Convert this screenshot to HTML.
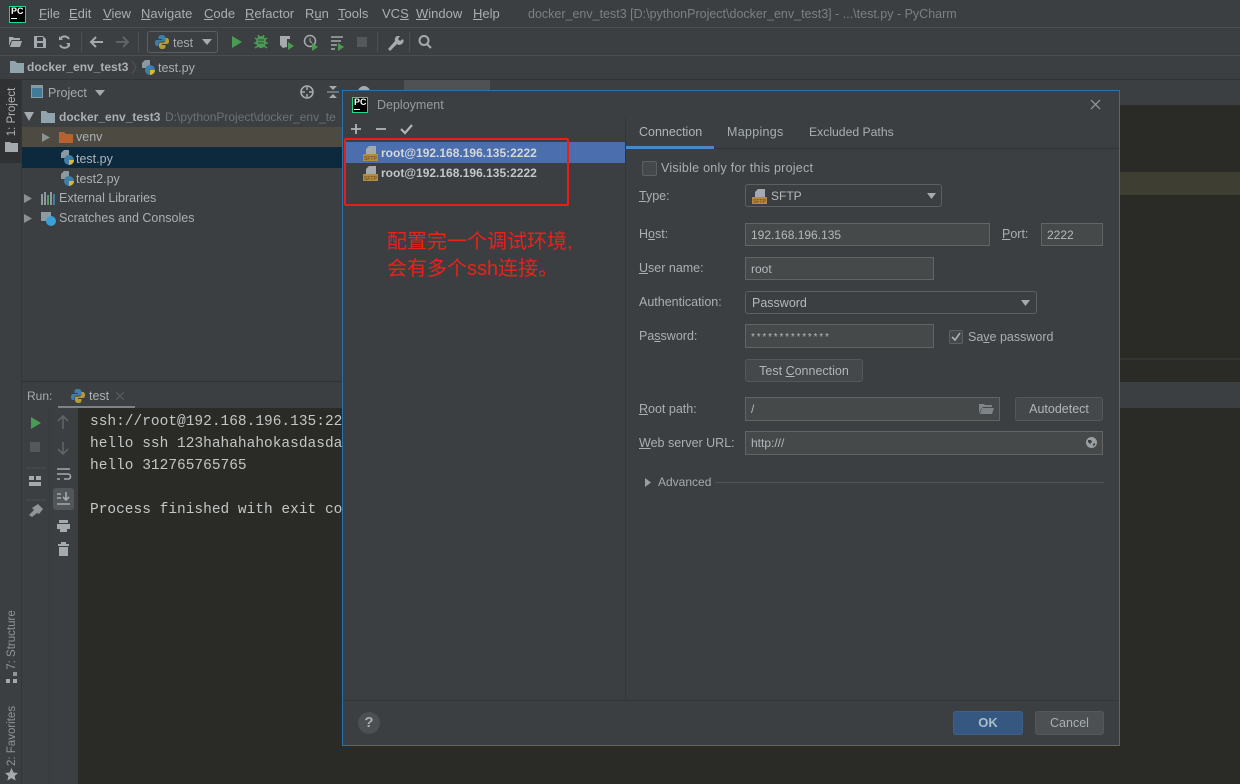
<!DOCTYPE html>
<html><head><meta charset="utf-8"><style>
html,body{margin:0;padding:0;background:#2b2b27}
#r{position:relative;width:1240px;height:784px;overflow:hidden;background:#2a2b26;font-family:"Liberation Sans","Noto Sans CJK SC",sans-serif;font-size:12.5px;color:#a9b0b5;filter:blur(.35px)}
#r div,#r span.a,#r svg{position:absolute}
.t{white-space:nowrap;line-height:16px}
u{text-underline-offset:1px}
.f{background:#45494a;border:1px solid #646464;box-sizing:border-box;padding-left:5px;line-height:23px;color:#b4b9bc;white-space:nowrap;font-size:12px}
.c{background:#3c3f41;border:1px solid #5e6060;border-radius:3px;box-sizing:border-box;padding-left:6px;line-height:22px;color:#b4b9bc;font-size:12.5px}
.b{background:#44484a;border:1px solid #555859;border-radius:3px;box-sizing:border-box;text-align:center;line-height:22px;color:#b0b5b8;white-space:nowrap}
.m{font-family:"Liberation Mono",monospace;font-size:14.5px;color:#c2c6c4;white-space:nowrap;line-height:20px}
</style></head><body><div id="r">
<!-- top bars -->
<div style="left:0;top:0;width:1240px;height:27px;background:#3c3f41"></div>
<div style="left:0;top:27px;width:1240px;height:1px;background:#4a4c4e"></div>
<div style="left:0;top:28px;width:1240px;height:27px;background:#3c3f41"></div>
<div style="left:0;top:55px;width:1240px;height:1px;background:#4b4d4e"></div>
<div style="left:0;top:56px;width:1240px;height:23px;background:#3c3f41"></div>
<div style="left:0;top:79px;width:1240px;height:1px;background:#323232"></div>
<div style="left:0;top:80px;width:1240px;height:25px;background:#3c3f41"></div>

<!-- PC logo -->
<div style="left:9px;top:6px;width:15px;height:15px;background:#000;border:1px solid #21d789;box-sizing:content-box"></div>
<div class="t" style="left:11px;top:6px;font-size:9px;font-weight:bold;color:#fff;line-height:11px">PC</div>
<div style="left:11px;top:18px;width:6px;height:1px;background:#fff"></div>
<!-- menu -->
<div class="t" style="left:39px;top:6px;font-size:13px;color:#a8aeb2"><u>F</u>ile</div>
<div class="t" style="left:69px;top:6px;font-size:13px;color:#a8aeb2"><u>E</u>dit</div>
<div class="t" style="left:103px;top:6px;font-size:13px;color:#a8aeb2"><u>V</u>iew</div>
<div class="t" style="left:141px;top:6px;font-size:13px;color:#a8aeb2"><u>N</u>avigate</div>
<div class="t" style="left:204px;top:6px;font-size:13px;color:#a8aeb2"><u>C</u>ode</div>
<div class="t" style="left:245px;top:6px;font-size:13px;color:#a8aeb2"><u>R</u>efactor</div>
<div class="t" style="left:305px;top:6px;font-size:13px;color:#a8aeb2">R<u>u</u>n</div>
<div class="t" style="left:338px;top:6px;font-size:13px;color:#a8aeb2"><u>T</u>ools</div>
<div class="t" style="left:382px;top:6px;font-size:13px;color:#a8aeb2">VC<u>S</u></div>
<div class="t" style="left:416px;top:6px;font-size:13px;color:#a8aeb2"><u>W</u>indow</div>
<div class="t" style="left:473px;top:6px;font-size:13px;color:#a8aeb2"><u>H</u>elp</div>
<div class="t" style="left:528px;top:6px;font-size:12.5px;color:#7b8083">docker_env_test3 [D:\pythonProject\docker_env_test3] - ...\test.py - PyCharm</div>

<!-- toolbar icons -->
<svg style="left:0;top:28px" width="450" height="28" viewBox="0 0 450 28">
<path d="M9 18V9h4l1 1h6v2h-8l-1 1zM10 19l2-6h10l-2 6z" fill="#a4aaad"/>
<path d="M34 8h9l3 3v9H34zM37 9v4h6V9zM37 15v4h6v-4z" fill="#a4aaad" fill-rule="evenodd"/>
<path d="M69 11a5 5 0 0 0-8-1M60 17a5 5 0 0 0 9 0" fill="none" stroke="#a4aaad" stroke-width="2"/><path d="M59 8v4h4zM70 19v-4h-4z" fill="#a4aaad"/>
<rect x="81" y="4" width="1" height="20" fill="#4e5052"/>
<path d="M103 14H91M96 9l-5 5 5 5" fill="none" stroke="#a4aaad" stroke-width="2"/>
<path d="M116 14h12M123 9l5 5-5 5" fill="none" stroke="#5f6466" stroke-width="2"/>
<rect x="138" y="4" width="1" height="20" fill="#4e5052"/>
<path d="M232 8l10 6-10 6z" fill="#499c54"/>
<ellipse cx="261" cy="14" rx="5" ry="6" fill="#499c54"/><path d="M255 10l3 2M267 10l-3 2M254 15h3M265 15h3M255 20l3-2M267 20l-3-2M258 7l1 2M264 7l-1 2" stroke="#499c54" stroke-width="1.5"/><path d="M258 12h6M258 15h6" stroke="#3c3f41"/>
<path d="M280 8h10v3h-3v8l-4 1-3-3z" fill="#a4aaad"/><path d="M288 14l6 4-6 4z" fill="#499c54"/>
<circle cx="310" cy="13" r="5.5" fill="none" stroke="#a4aaad" stroke-width="1.5"/><path d="M310 10v3l2 2" stroke="#a4aaad" fill="none"/><path d="M312 15l6 4-6 4z" fill="#499c54"/>
<path d="M331 9h12M331 13h10M331 17h6M331 21h4" stroke="#a4aaad" stroke-width="1.6"/><path d="M338 15l6 4-6 4z" fill="#499c54"/>
<rect x="357" y="9" width="10" height="10" fill="#55585a"/>
<rect x="377" y="4" width="1" height="20" fill="#4e5052"/>
<path d="M388 21l7-8a4 4 0 0 1 2-5l3 0-2 3 2 2 3-2a4 4 0 0 1-6 5l-7 7z" fill="#a4aaad"/>
<rect x="409" y="4" width="1" height="20" fill="#4e5052"/>
<circle cx="424" cy="12.500" r="4.500" fill="none" stroke="#a4aaad" stroke-width="2"/><path d="M427 16l4 4" stroke="#a4aaad" stroke-width="2"/>
</svg>
<!-- run config combo -->
<div style="left:147px;top:31px;width:71px;height:22px;border:1px solid #5b5e60;border-radius:3px;box-sizing:border-box;background:#3c3f41"></div>
<svg style="left:155px;top:35px" width="14" height="14" viewBox="0 0 14 14"><path d="M7 0C4 0 3.500 1 3.500 3v1H7v1H2C0.500 5 0 6.500 0 8s.7 3 2 3h1.500V9c0-1.500 1-2.500 2.500-2.500h3c1 0 1.500-.7 1.500-1.500V3C10.500 1 9 0 7 0z" fill="#3d7fa8"/><path d="M7 14c3 0 3.500-1 3.500-3v-1H7V9h5c1.500 0 2-1.500 2-3s-.7-3-2-3h-1.500v2c0 1.500-1 2.500-2.500 2.500H5.500C4.500 7.500 4 8.200 4 9v2c0 2 1.500 3 3 3z" fill="#b59a3a"/></svg>
<div class="t" style="left:173px;top:35px;font-size:12.5px;color:#a4aaad">test</div>
<svg style="left:202px;top:39px" width="10" height="6"><path d="M0 0h10L5 6z" fill="#a4aaad"/></svg>

<!-- breadcrumb -->
<svg style="left:10px;top:61px" width="14" height="12"><path d="M0 0h5l2 2h7v10H0z" fill="#90a4ae"/></svg>
<div class="t" style="left:27px;top:59px;font-weight:bold;font-size:12px;color:#aab0b4">docker_env_test3</div>
<svg style="left:131px;top:60px" width="6" height="15"><path d="M1 1l4 6-4 7" fill="none" stroke="#55585a"/></svg>
<svg style="left:142px;top:60px" width="14" height="15" viewBox="0 0 14 15"><path d="M3 0h5v8H0V3z" fill="#8a9aa3"/><circle cx="8" cy="10" r="5" fill="#3d7fa8"/><path d="M8 15a5 5 0 0 0 5-5H8z" fill="#e0b43a"/></svg>
<div class="t" style="left:158px;top:60px;color:#a9afb3">test.py</div>

<!-- left strip -->
<div style="left:0;top:80px;width:21px;height:704px;background:#3c3f41"></div>
<div style="left:21px;top:80px;width:1px;height:704px;background:#333536"></div>
<div style="left:0;top:80px;width:21px;height:83px;background:#2f3132"></div>
<div class="t" style="left:-18px;top:104px;width:60px;transform:rotate(-90deg);text-align:center;font-size:11.5px;color:#b0b5b8;">1: Project</div>
<svg style="left:5px;top:142px" width="13" height="10"><path d="M0 0h5l1 1h7v9H0z" fill="#a4aaad"/></svg>
<div class="t" style="left:-18px;top:632px;width:60px;transform:rotate(-90deg);text-align:center;font-size:11.5px;color:#8f9598">7: Structure</div>
<svg style="left:6px;top:672px" width="11" height="12"><rect x="7" y="0" width="4" height="4" fill="#8f9598"/><rect x="0" y="7" width="4" height="4" fill="#a4aaad"/><rect x="7" y="7" width="4" height="4" fill="#a4aaad"/></svg>
<div class="t" style="left:-18px;top:728px;width:60px;transform:rotate(-90deg);text-align:center;font-size:11.5px;color:#8f9598">2: Favorites</div>
<svg style="left:5px;top:768px" width="13" height="13" viewBox="0 0 13 13"><path d="M6.500 0l2 4.500 4.500.5-3.400 3 1 4.500-4.100-2.400L2.400 12.500l1-4.500L0 5l4.500-.5z" fill="#a4aaad"/></svg>

<!-- project pane -->
<div style="left:22px;top:80px;width:322px;height:302px;background:#3c3f41"></div>
<div style="left:31px;top:85px;width:12px;height:13px;background:#3f7c99;border:1px solid #8a9aa3;border-top-width:3px;box-sizing:border-box"></div>
<div class="t" style="left:48px;top:85px;font-size:12.5px;color:#a4aaad">Project</div>
<svg style="left:95px;top:90px" width="10" height="6"><path d="M0 0h10L5 6z" fill="#a4aaad"/></svg>
<svg style="left:299px;top:84px" width="80" height="16"><circle cx="8" cy="8" r="6" fill="none" stroke="#a4aaad" stroke-width="1.6"/><path d="M8 2v4M8 10v4M2 8h4M10 8h4" stroke="#a4aaad" stroke-width="1.5"/><path d="M28 8h12" stroke="#a4aaad"/><path d="M30 2l4 4 4-4zM30 14l4-4 4 4z" fill="#a4aaad"/><circle cx="65" cy="8" r="6" fill="#a4aaad"/></svg>
<svg style="left:24px;top:112px" width="10" height="9"><path d="M0 0h10L5 9z" fill="#a4aaad"/></svg>
<svg style="left:41px;top:110px" width="14" height="13"><path d="M0 1h5l2 2h7v10H0z" fill="#90a4ae"/></svg>
<div class="t" style="left:59px;top:109px;font-weight:bold;font-size:12px;color:#aab0b4">docker_env_test3</div>
<div class="t" style="left:165px;top:109px;font-size:12px;color:#6d7275">D:\pythonProject\docker_env_te</div>
<div style="left:22px;top:127px;width:322px;height:20px;background:#4d4a41"></div>
<svg style="left:42px;top:133px" width="8" height="9"><path d="M0 0l8 4.500L0 9z" fill="#8c9093"/></svg>
<svg style="left:59px;top:132px" width="14" height="11"><path d="M0 0h5l2 2h7v9H0z" fill="#b5622e"/></svg>
<div class="t" style="left:76px;top:129px;color:#a9afb3">venv</div>
<div style="left:22px;top:147px;width:322px;height:21px;background:#0d293e"></div>
<svg style="left:61px;top:150px" width="14" height="15" viewBox="0 0 14 15"><path d="M3 0h5v8H0V3z" fill="#8a9aa3"/><circle cx="8" cy="10" r="5" fill="#3d7fa8"/><path d="M8 15a5 5 0 0 0 5-5H8z" fill="#e0b43a"/></svg>
<div class="t" style="left:76px;top:151px;font-size:12.5px;color:#b0b5b8">test.py</div>
<svg style="left:61px;top:171px" width="14" height="15" viewBox="0 0 14 15"><path d="M3 0h5v8H0V3z" fill="#8a9aa3"/><circle cx="8" cy="10" r="5" fill="#3d7fa8"/><path d="M8 15a5 5 0 0 0 5-5H8z" fill="#e0b43a"/></svg>
<div class="t" style="left:76px;top:171px;font-size:12.5px;color:#a9afb3">test2.py</div>
<svg style="left:24px;top:194px" width="9" height="9"><path d="M0 0l8 4.500L0 9z" fill="#8c9093"/></svg>
<svg style="left:41px;top:192px" width="15" height="13"><path d="M1 2v11M4 0v13M7 3v10M10 0v13M13 2v11" stroke-width="2" stroke="#8f9aa0"/><path d="M7 3v10" stroke="#5a9a6a" stroke-width="2"/><path d="M13 2v11" stroke="#3d7fa8" stroke-width="2"/></svg>
<div class="t" style="left:59px;top:190px;font-size:12.500px;color:#a9afb3">External Libraries</div>
<svg style="left:24px;top:214px" width="9" height="9"><path d="M0 0l8 4.500L0 9z" fill="#8c9093"/></svg>
<svg style="left:41px;top:212px" width="16" height="14"><rect x="0" y="0" width="10" height="9" fill="#8f9aa0"/><circle cx="10" cy="9" r="5" fill="#3aa0d8"/></svg>
<div class="t" style="left:59px;top:210px;font-size:12.500px;color:#a9afb3">Scratches and Consoles</div>

<!-- editor -->
<div style="left:344px;top:105px;width:896px;height:255px;background:#2a2b26"></div>
<div style="left:404px;top:80px;width:86px;height:25px;background:#4e5254"></div>
<div style="left:1120px;top:172px;width:120px;height:23px;background:#3e3e33"></div>
<div style="left:1120px;top:358px;width:120px;height:2px;background:#333434"></div>
<div style="left:1120px;top:382px;width:120px;height:26px;background:#3c3f41"></div>

<!-- run pane -->
<div style="left:22px;top:381px;width:330px;height:1px;background:#323232"></div>
<div style="left:22px;top:382px;width:330px;height:26px;background:#3c3f41"></div>
<div class="t" style="left:27px;top:388px;font-size:12px;color:#a4aaad">Run:</div>
<svg style="left:71px;top:389px" width="14" height="14" viewBox="0 0 14 14"><path d="M7 0C4 0 3.500 1 3.500 3v1H7v1H2C0.500 5 0 6.500 0 8s.7 3 2 3h1.500V9c0-1.500 1-2.500 2.500-2.500h3c1 0 1.500-.7 1.500-1.500V3C10.500 1 9 0 7 0z" fill="#3d7fa8"/><path d="M7 14c3 0 3.500-1 3.500-3v-1H7V9h5c1.500 0 2-1.500 2-3s-.7-3-2-3h-1.500v2c0 1.500-1 2.500-2.500 2.500H5.500C4.500 7.500 4 8.200 4 9v2c0 2 1.500 3 3 3z" fill="#b59a3a"/></svg>
<div class="t" style="left:89px;top:388px;font-size:12.500px;color:#a9afb3">test</div>
<svg style="left:116px;top:392px" width="8" height="8"><path d="M0 0l8 8M8 0L0 8" stroke="#5d6163"/></svg>
<div style="left:58px;top:406px;width:77px;height:3px;background:#7e8284"></div>
<div style="left:22px;top:408px;width:27px;height:376px;background:#3c3f41"></div>
<div style="left:49px;top:408px;width:29px;height:376px;background:#3c3f41;border-left:1px solid #383a3c;box-sizing:border-box"></div>
<div style="left:53px;top:488px;width:21px;height:22px;background:#515659;border-radius:3px"></div>
<svg style="left:22px;top:408px" width="56" height="160">
<path d="M9 9l10 6-10 6z" fill="#499c54"/>
<rect x="8" y="34" width="10" height="10" fill="#55585a"/>
<path d="M4 60h20M4 92h20" stroke="#4b4e50"/>
<path d="M7 68h5v4H7zM14 68h5v4h-5zM7 74h12v4H7z" fill="#a4aaad"/>
<path d="M41 21V8M36 13l5-5 5 5" fill="none" stroke="#5f6466" stroke-width="1.600"/>
<path d="M41 34v12M36 41l5 5 5-5" fill="none" stroke="#5f6466" stroke-width="1.600"/>
<path d="M35 61h13M35 66h11a2.500 2.500 0 0 1 0 5h-4M35 71h3" fill="none" stroke="#a4aaad" stroke-width="1.600"/>
<path d="M35 86h4M35 90h4M35 96h13M44 84v8M41 89l3 3 3-3" fill="none" stroke="#a4aaad" stroke-width="1.600"/>
<path d="M37 112h9v3h-9zM35 116h13v5h-3v3h-7v-3h-3z" fill="#a4aaad"/>
<path d="M36 136h11v2H36zM37 139h9v9h-9zM39 134h5v2h-5z" fill="#a4aaad"/>
<path d="M7 107l5-5-2-2 6-4 5 5-4 5-2-1-5 4z" fill="#8f9598"/>
</svg>
<div style="left:78px;top:408px;width:270px;height:376px;overflow:hidden;background:#2a2b26"></div>
<div class="m" style="left:90px;top:412px">ssh://root@192.168.196.135:22</div>
<div class="m" style="left:90px;top:434px">hello ssh 123hahahahokasdasda</div>
<div class="m" style="left:90px;top:456px">hello 312765765765</div>
<div class="m" style="left:90px;top:500px">Process finished with exit co</div>

<!-- dialog -->
<div style="left:342px;top:90px;width:778px;height:656px;background:#3c3f41;border:1px solid #2673ad;box-sizing:border-box"></div>
<div style="left:352px;top:97px;width:14px;height:14px;background:#000;border:1px solid #21d789"></div>
<div class="t" style="left:354px;top:97px;font-size:9px;font-weight:bold;color:#fff;line-height:11px">PC</div>
<div style="left:354px;top:109px;width:6px;height:1px;background:#fff"></div>
<div class="t" style="left:377px;top:97px;font-size:12.500px;color:#979c9f">Deployment</div>
<svg style="left:1090px;top:99px" width="11" height="11"><path d="M1 1l9 9M10 1l-9 9" stroke="#9a9fa2" stroke-width="1.200"/></svg>
<svg style="left:350px;top:123px" width="66" height="14"><path d="M6 1v10M1 6h10" stroke="#b0b5b8" stroke-width="1.800"/><path d="M26 6h10" stroke="#b0b5b8" stroke-width="1.800"/><path d="M51 6l4 4 7-8" fill="none" stroke="#b0b5b8" stroke-width="2.200"/></svg>
<div style="left:625px;top:118px;width:1px;height:582px;background:#333536"></div>
<!-- list -->
<div style="left:346px;top:142px;width:279px;height:21px;background:#4b6eaf"></div>
<svg style="left:363px;top:146px" width="16" height="15" viewBox="0 0 16 15"><path d="M6 0h7v8H3V3z" fill="#a4aaad"/><rect y="8" width="15" height="7" fill="#b58a3a"/><text x="1" y="14" font-size="5" font-family="Liberation Sans" fill="#5a4420">SFTP</text></svg>
<div class="t" style="left:381px;top:145px;font-weight:bold;font-size:12px;color:#d5d7d9">root@192.168.196.135:2222</div>
<svg style="left:363px;top:166px" width="16" height="15" viewBox="0 0 16 15"><path d="M6 0h7v8H3V3z" fill="#a4aaad"/><rect y="8" width="15" height="7" fill="#b58a3a"/><text x="1" y="14" font-size="5" font-family="Liberation Sans" fill="#5a4420">SFTP</text></svg>
<div class="t" style="left:381px;top:165px;font-weight:bold;font-size:12px;color:#c3c6c8">root@192.168.196.135:2222</div>
<div style="left:344px;top:138px;width:225px;height:68px;border:2px solid #f01b12;border-radius:2px;box-sizing:border-box"></div>
<div class="t" style="left:387px;top:229px;font-size:20px;line-height:27px;color:#e8231a;white-space:nowrap">配置完一个调试环境,<br>会有多个ssh连接。</div>

<!-- tabs -->
<div style="left:626px;top:148px;width:493px;height:1px;background:#323232"></div>
<div style="left:626px;top:146px;width:88px;height:3px;background:#4a88c7"></div>
<div class="t" style="left:639px;top:124px;color:#b0b5b8">Connection</div>
<div class="t" style="left:727px;top:124px;color:#a9afb3;letter-spacing:.3px">Mappings</div>
<div class="t" style="left:809px;top:124px;color:#a9afb3;font-size:12.2px">Excluded Paths</div>

<!-- form -->
<div style="left:642px;top:161px;width:13px;height:13px;background:#43494a;border:1px solid #5e6060;border-radius:2px"></div>
<div class="t" style="left:661px;top:160px;color:#a9afb3;letter-spacing:.25px">Visible only for this project</div>
<div class="t" style="left:639px;top:188px;color:#a9afb3"><u>T</u>ype:</div>
<div class="c" style="left:745px;top:184px;width:197px;height:23px"></div>
<svg style="left:752px;top:189px" width="16" height="15" viewBox="0 0 16 15"><path d="M6 0h7v8H3V3z" fill="#a4aaad"/><rect y="8" width="15" height="7" fill="#b58a3a"/><text x="1" y="14" font-size="5" font-family="Liberation Sans" fill="#5a4420">SFTP</text></svg>
<div class="t" style="left:771px;top:188px;font-size:12px;color:#b4b9bc">SFTP</div>
<svg style="left:927px;top:193px" width="9" height="6"><path d="M0 0h9L4.500 6z" fill="#a4aaad"/></svg>
<div class="t" style="left:639px;top:226px;color:#a9afb3">H<u>o</u>st:</div>
<div class="f" style="left:745px;top:223px;width:245px;height:23px">192.168.196.135</div>
<div class="t" style="left:1002px;top:226px;color:#a9afb3"><u>P</u>ort:</div>
<div class="f" style="left:1041px;top:223px;width:62px;height:23px">2222</div>
<div class="t" style="left:639px;top:260px;color:#a9afb3"><u>U</u>ser name:</div>
<div class="f" style="left:745px;top:257px;width:189px;height:23px">root</div>
<div class="t" style="left:639px;top:294px;color:#a9afb3">Authentication:</div>
<div class="c" style="left:745px;top:291px;width:292px;height:23px">Password</div>
<svg style="left:1021px;top:300px" width="9" height="6"><path d="M0 0h9L4.500 6z" fill="#a4aaad"/></svg>
<div class="t" style="left:639px;top:328px;color:#a9afb3">Pa<u>s</u>sword:</div>
<div class="f" style="left:745px;top:324px;width:189px;height:24px"></div>
<div class="t" style="left:751px;top:330px;font-size:10px;color:#b4b9bc;letter-spacing:1.8px">**************</div>
<div style="left:949px;top:330px;width:12px;height:12px;background:#43494a;border:1px solid #5e6060;border-radius:2px"></div>
<svg style="left:950px;top:331px" width="12" height="12"><path d="M2 6l3 3 5-7" fill="none" stroke="#a9afb3" stroke-width="1.600"/></svg>
<div class="t" style="left:968px;top:329px;color:#a9afb3">Sa<u>v</u>e password</div>
<div class="b" style="left:745px;top:359px;width:118px;height:23px">Test <u>C</u>onnection</div>
<div class="t" style="left:639px;top:401px;color:#a9afb3"><u>R</u>oot path:</div>
<div class="f" style="left:745px;top:397px;width:255px;height:24px">/</div>
<svg style="left:979px;top:403px" width="15" height="12"><path d="M0 11V1h5l1 1h7v2H4l-2 2zM1 11l2-6h12l-2 6z" fill="#7e8487"/></svg>
<div class="b" style="left:1015px;top:397px;width:88px;height:24px">Autodetect</div>
<div class="t" style="left:639px;top:435px;color:#a9afb3"><u>W</u>eb server URL:</div>
<div class="f" style="left:745px;top:431px;width:358px;height:24px">http:///</div>
<svg style="left:1086px;top:437px" width="11" height="11" viewBox="0 0 11 11"><circle cx="5.500" cy="5.500" r="5.500" fill="#9a9fa2"/><path d="M2 3l3 0 1 2-2 2-2-2zM7 7l2-1 0 2-2 1z" fill="#3c3f41"/></svg>
<svg style="left:645px;top:478px" width="6" height="9"><path d="M0 0l6 4.500L0 9z" fill="#9a9fa2"/></svg>
<div class="t" style="left:658px;top:474px;font-size:12px;color:#a4aaad">Advanced</div>
<div style="left:715px;top:482px;width:389px;height:1px;background:#515355"></div>

<!-- footer -->
<div style="left:343px;top:700px;width:776px;height:1px;background:#333536"></div>
<div style="left:358px;top:712px;width:22px;height:22px;background:#4c5052;border-radius:50%;text-align:center;font-weight:bold;font-size:15px;line-height:22px;color:#a9afb3">?</div>
<div class="b" style="left:953px;top:711px;width:70px;height:24px;background:#365880;border-color:#3f6188;font-weight:bold;font-size:13px;color:#a9bbcc">OK</div>
<div class="b" style="left:1035px;top:711px;width:69px;height:24px;background:#4c5052;border-color:#55585a;color:#a9afb3">Cancel</div>
</div></body></html>
